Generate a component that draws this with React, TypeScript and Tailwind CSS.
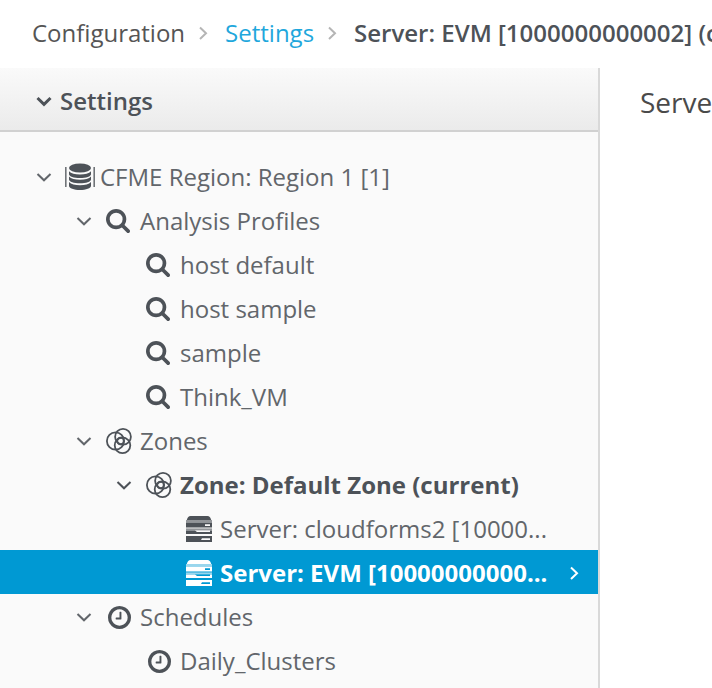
import React from "react";

type IconName = "region" | "search" | "zone" | "server" | "clock";

function RegionIcon() {
  return (
    <svg viewBox="0 0 30 28" className="h-7 w-[30px]" fill="currentColor" aria-hidden="true">
      <rect x="0" y="4" width="1.600" height="20" opacity=".8" />
      <rect x="28.400" y="4" width="1.600" height="20" opacity=".8" />
      <ellipse cx="15" cy="5" rx="11" ry="4.5" />
      <path d="M4 8.200c2 2.500 6 3.200 11 3.200s9-.7 11-3.200v3c0 2.400-5 3.800-11 3.800s-11-1.400-11-3.800z" />
      <path d="M4 13.600c2 2.500 6 3.200 11 3.200s9-.7 11-3.200v2.800c0 2.400-5 3.800-11 3.800s-11-1.400-11-3.800z" />
      <path d="M4 19c2 2.500 6 3.200 11 3.200s9-.7 11-3.200v3.800c0 2.600-5 4.200-11 4.200s-11-1.600-11-4.200z" />
    </svg>
  );
}

function SearchIcon() {
  return (
    <svg viewBox="0 0 1664 1664" className="size-6" fill="currentColor" aria-hidden="true">
      <path d="M1152 704q0-185-131.5-316.5t-316.5-131.5-316.5 131.5-131.5 316.5 131.5 316.5 316.5 131.5 316.5-131.5 131.5-316.5zm512 832q0 52-38 90t-90 38q-54 0-90-38l-343-342q-179 124-399 124-143 0-273.5-55.5t-225-150-150-225-55.5-273.5 55.5-273.5 150-225 225-150 273.5-55.5 273.5 55.5 225 150 150 225 55.5 273.500q0 220-124 399l343 343q37 37 37 90z" />
    </svg>
  );
}

function ZoneIcon() {
  return (
    <svg viewBox="0 0 26 26" className="size-[26px]" fill="none" stroke="currentColor" strokeWidth="1.8" aria-hidden="true">
      <circle cx="9.500" cy="13" r="8.600" />
      <circle cx="17" cy="8.800" r="7.900" />
      <circle cx="16.500" cy="17.300" r="7.800" />
      <circle cx="14.500" cy="13" r="3.300" />
    </svg>
  );
}

function ServerIcon() {
  return (
    <svg viewBox="0 0 26 26" className="size-[26px]" fill="currentColor" aria-hidden="true">
      <path d="M4.500 0h17c1.800 0 3 1.600 3.700 4H.8C1.500 1.600 2.700 0 4.500 0z" />
      <path d="M0 4h26v2.400H0z" opacity=".6" />
      <path fillRule="evenodd" d="M0 6.400h26v5.200H0zM19 8.300h5v1.600h-5z" />
      <path d="M0 12.400h26v2H0z" opacity=".6" />
      <path fillRule="evenodd" d="M0 14.400h26v3.600H0zM9 14.400h15v1.600H11z" />
      <path fillRule="evenodd" d="M0 20h26v6H0zM16 22.200h8v1.700h-9z" />
    </svg>
  );
}

function ClockIcon() {
  return (
    <svg viewBox="128 128 1536 1536" className="size-[23px]" fill="currentColor" aria-hidden="true">
      <path d="M1024 544v448q0 14-9 23t-23 9h-320q-14 0-23-9t-9-23v-64q0-14 9-23t23-9h224v-352q0-14 9-23t23-9h64q14 0 23 9t9 23zm416 352q0-148-73-273t-198-198-273-73-273 73-198 198-73 273 73 273 198 198 273 73 273-73 198-198 73-273zm224 0q0 209-103 385.5t-279.5 279.5-385.5 103-385.5-103-279.5-279.5-103-385.5 103-385.5 279.5-279.5 385.5-103 385.5 103 279.5 279.5 103 385.500z" />
    </svg>
  );
}

function ChevronDown({ weight = 2 }: { weight?: number }) {
  return (
    <svg viewBox="0 0 16 16" className="size-4 shrink-0" fill="none" stroke="currentColor" strokeWidth={weight} aria-hidden="true">
      <path d="M1.500 5 8 11.300 14.500 5" />
    </svg>
  );
}

function ChevronRight() {
  return (
    <svg viewBox="0 0 16 16" className="size-4 shrink-0" fill="none" stroke="currentColor" strokeWidth="2" aria-hidden="true">
      <path d="m5 2.500 6 5.700-6 5.700" />
    </svg>
  );
}

const icons: Record<IconName, React.ReactNode> = {
  region: <RegionIcon />,
  search: <SearchIcon />,
  zone: <ZoneIcon />,
  server: <ServerIcon />,
  clock: <ClockIcon />,
};

const iconPadding: Record<IconName, string> = {
  region: "pl-3 pr-1",
  search: "pl-3 pr-2",
  zone: "pl-3 pr-1.5",
  server: "pl-3 pr-1.5",
  clock: "pl-3 pr-1.5",
};

const indents = ["pl-9", "pl-19", "pl-29", "pl-39"];

type Item = { label: string; icon: IconName; level: number; open?: boolean; bold?: boolean; selected?: boolean };

const items: Item[] = [
  { label: "CFME Region: Region 1 [1]", icon: "region", level: 0, open: true },
  { label: "Analysis Profiles", icon: "search", level: 1, open: true },
  { label: "host default", icon: "search", level: 2 },
  { label: "host sample", icon: "search", level: 2 },
  { label: "sample", icon: "search", level: 2 },
  { label: "Think_VM", icon: "search", level: 2 },
  { label: "Zones", icon: "zone", level: 1, open: true },
  { label: "Zone: Default Zone (current)", icon: "zone", level: 2, open: true, bold: true },
  { label: "Server: cloudforms2 [10000...", icon: "server", level: 3 },
  { label: "Server: EVM [10000000000...", icon: "server", level: 3, bold: true, selected: true },
  { label: "Schedules", icon: "clock", level: 1, open: true },
  { label: "Daily_Clusters", icon: "clock", level: 2 },
];

function TreeRow({ item }: { item: Item }) {
  const tone = item.selected ? "bg-[#0099d3] text-white" : item.bold ? "text-[#4d5258]" : "text-[#62666b]";
  return (
    <li role="treeitem" aria-level={item.level + 1} aria-expanded={item.open} aria-selected={!!item.selected}>
      <button type="button" className={`flex h-11 w-full items-center pt-0.5 pr-4 text-left ${indents[item.level]} ${tone}`}>
        <span className="flex w-4 shrink-0">{item.open && <ChevronDown />}</span>
        <span className={`flex w-12 shrink-0 justify-center ${item.selected ? "" : "text-[#4d5258]"} ${iconPadding[item.icon]}`}>
          {icons[item.icon]}
        </span>
        <span className={`grow whitespace-nowrap ${item.bold ? "font-bold" : ""}`}>{item.label}</span>
        {item.selected && <ChevronRight />}
      </button>
    </li>
  );
}

export default function App() {
  return (
    <div className="flex h-screen flex-col overflow-hidden bg-white font-['Open_Sans',sans-serif] text-2xl text-[#4d5258]">
      <nav aria-label="Breadcrumb" className="shrink-0">
        <ol className="flex h-17 items-center whitespace-nowrap pb-0.5 pl-8">
          <li className="text-[#555555]">Configuration</li>
          <li className="pl-2.5 pr-3.5 text-[#b5b5b5]"><ChevronRight /></li>
          <li><a href="#settings" className="text-[#1fa7dc]">Settings</a></li>
          <li className="pl-2.5 pr-3.5 text-[#b5b5b5]"><ChevronRight /></li>
          <li className="font-semibold" aria-current="page">Server: EVM [1000000000002] (c</li>
        </ol>
      </nav>
      <div className="flex min-h-0 grow">
        <aside className="w-150 shrink-0 overflow-hidden border-r-2 border-[#d9d9d9] bg-[#fafafa]">
          <button type="button" aria-expanded="true" className="flex h-16 w-full items-center gap-2 border-b-2 border-[#d1d1d1] bg-linear-to-b from-[#fafafa] to-[#ebebeb] pt-1 pl-9 font-semibold">
            <ChevronDown weight={3} />
            Settings
          </button>
          <ul role="tree" aria-label="Settings" className="pt-[22px]">
            {items.map((item) => (
              <TreeRow key={item.label} item={item} />
            ))}
          </ul>
        </aside>
        <main className="min-w-0 grow overflow-hidden pl-10 pt-4">
          <h1 className="whitespace-nowrap text-[28px] leading-9 text-[#4a4a4a]">Serve</h1>
        </main>
      </div>
    </div>
  );
}
